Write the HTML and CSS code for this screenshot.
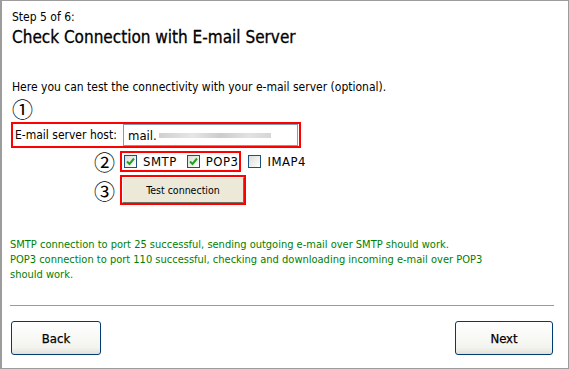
FILE: index.html
```html
<!DOCTYPE html>
<html lang="en">
<head>
  <meta charset="UTF-8" />
  <title>Step 5 of 6</title>
  <link rel="stylesheet" href="styles.css">
</head>
<body>
  <div class="window">
    <div class="content">
      <div class="step">Step 5 of 6:</div>
      <h1>Check Connection with E-mail Server</h1>
      <p class="desc">Here you can test the connectivity with your e-mail server (optional).</p>

      <div class="marker">①</div>
      <div class="host-box">
        <label for="host">E-mail server host:</label>
        <div class="input"><span>mail.</span><span class="blur"></span></div>
      </div>

      <div class="row proto-row">
        <span class="marker small">②</span>
        <div class="highlight protos">
          <span class="check on"><svg viewBox="0 0 9 9" width="9" height="9"><path d="M1 4.5 L3.5 7 L8 1.5" fill="none" stroke="#21a121" stroke-width="2"/></svg></span>
          <span class="proto">SMTP</span>
          <span class="check on"><svg viewBox="0 0 9 9" width="9" height="9"><path d="M1 4.5 L3.5 7 L8 1.5" fill="none" stroke="#21a121" stroke-width="2"/></svg></span>
          <span class="proto">POP3</span>
        </div>
        <span class="check"></span>
        <span class="proto">IMAP4</span>
      </div>

      <div class="row test-row">
        <span class="marker small">③</span>
        <div class="highlight">
          <button class="test-btn">Test connection</button>
        </div>
      </div>

      <p class="result">SMTP connection to port 25 successful, sending outgoing e-mail over SMTP should work.<br>
      POP3 connection to port 110 successful, checking and downloading incoming e-mail over POP3 should work.</p>
    </div>

    <hr class="sep">

    <div class="nav">
      <button class="nav-btn">Back</button>
      <button class="nav-btn">Next</button>
    </div>
  </div>
</body>
</html>
```

FILE: styles.css
```css
body {
  margin: 0;
  font-family: 'DejaVu Sans Condensed', 'DejaVu Sans', sans-serif;
  font-size: 12px;
  color: #000;
  background: #fff;
}

.window {
  width: 569px;
  height: 369px;
  box-sizing: border-box;
  border: 1px solid #9c9c9c;
  border-left-width: 2px;
  display: flex;
  flex-direction: column;
}

.content {
  padding: 9px 0 0 10px;
  flex: 1;
}

.step {
  font-size: 12px;
  line-height: 15px;
}

h1 {
  font-size: 17px;
  font-weight: normal;
  margin: 2px 0 0;
  line-height: 20px;
  -webkit-text-stroke: 0.3px #000;
}

.desc {
  margin: 33px 0 0;
  line-height: 15px;
}

.marker {
  font-family: 'Noto Sans CJK JP', sans-serif;
  font-size: 21px;
  line-height: 24px;
  margin-top: 1px;
}

.marker.small {
  margin: 0;
  width: 26px;
}

.host-box {
  display: flex;
  align-items: center;
  width: 290px;
  height: 26px;
  box-sizing: border-box;
  border: 2px solid #f00;
  margin: 2px 0 0 -1px;
  padding-left: 2px;
}

.host-box label {
  width: 108px;
  white-space: nowrap;
}

.input {
  width: 175px;
  height: 22px;
  box-sizing: border-box;
  border: 1px solid #7f9db9;
  display: flex;
  align-items: center;
  padding-left: 4px;
  font-size: 13px;
}

.blur {
  display: inline-block;
  width: 112px;
  height: 5px;
  margin-left: 2px;
  background: linear-gradient(90deg, #d0d0d0, #e6e6e6 30%, #cccccc 55%, #e2e2e2 80%, #d6d6d6);
}

.row {
  display: flex;
  align-items: center;
  padding-left: 82px;
}

.proto-row {
  margin-top: 2px;
  height: 22px;
}

.highlight {
  border: 2px solid #f00;
  display: flex;
  align-items: center;
}

.protos {
  height: 21px;
  box-sizing: border-box;
  padding: 0 1px 0 2px;
}

.check {
  width: 13px;
  height: 13px;
  box-sizing: border-box;
  border: 1px solid #1c5180;
  background: linear-gradient(135deg, #dcdcd7, #fff);
  display: inline-flex;
  align-items: center;
  justify-content: center;
  margin-right: 6px;
}

.proto {
  font-size: 13px;
  letter-spacing: 0.5px;
  margin-right: 10px;
}

.protos .proto:last-child {
  margin-right: 0;
}

.protos + .check {
  margin-left: 7px;
}

.test-row {
  margin-top: 3px;
}

.test-btn {
  width: 122px;
  height: 26px;
  font-family: 'DejaVu Sans Condensed', 'DejaVu Sans', sans-serif;
  font-size: 10.5px;
  background: #ece9d8;
  border: 1px solid;
  border-color: #fff #716f64 #716f64 #fff;
  padding: 0;
}

.result {
  color: #008000;
  font-size: 11px;
  margin: 32px 0 0 -2px;
  line-height: 15px;
  width: 495px;
}

.sep {
  margin: 0 14px 0 8px;
  border: 0;
  border-top: 1px solid #9c9c9c;
  height: 0;
}

.nav {
  display: flex;
  justify-content: space-between;
  padding: 15px 15px 13px 9px;
}

.nav-btn {
  width: 90px;
  height: 34px;
  border: 1px solid #003c74;
  border-radius: 3px;
  background: linear-gradient(#fff, #f3f3ef 80%, #e2e0d6);
  font-family: 'DejaVu Sans Condensed', 'DejaVu Sans', sans-serif;
  font-size: 13px;
  -webkit-text-stroke: 0.25px #000;
  padding: 0;
}

.nav-btn:last-child {
  width: 98px;
}
```
